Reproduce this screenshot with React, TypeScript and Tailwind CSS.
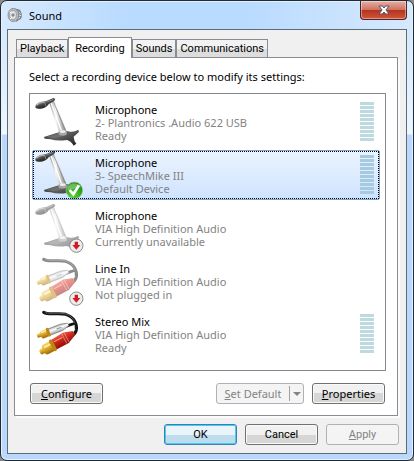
import type { ReactNode } from "react";

type Status = "ready" | "default" | "off";

type Device = {
  name: string;
  detail: string;
  state: string;
  icon: "mic" | "plug";
  status: Status;
};

const devices: Device[] = [
  { name: "Microphone", detail: "2- Plantronics .Audio 622 USB", state: "Ready", icon: "mic", status: "ready" },
  { name: "Microphone", detail: "3- SpeechMike III", state: "Default Device", icon: "mic", status: "default" },
  { name: "Microphone", detail: "VIA High Definition Audio", state: "Currently unavailable", icon: "mic", status: "off" },
  { name: "Line In", detail: "VIA High Definition Audio", state: "Not plugged in", icon: "plug", status: "off" },
  { name: "Stereo Mix", detail: "VIA High Definition Audio", state: "Ready", icon: "plug", status: "ready" },
];

const tabs = ["Playback", "Recording", "Sounds", "Communications"];

function Gradients() {
  return (
    <svg width="0" height="0" className="absolute" aria-hidden="true">
      <defs>
        <linearGradient id="metal" x1="0" y1="0" x2="1" y2="0">
          <stop offset="0" stopColor="#8b8b8b" />
          <stop offset="0.4" stopColor="#f7f7f7" />
          <stop offset="1" stopColor="#8e8e8e" />
        </linearGradient>
        <linearGradient id="head" x1="0" y1="0" x2="0" y2="1">
          <stop offset="0" stopColor="#8a8a8a" />
          <stop offset="0.5" stopColor="#444" />
          <stop offset="1" stopColor="#222" />
        </linearGradient>
        <linearGradient id="base" x1="0" y1="0" x2="1" y2="1">
          <stop offset="0" stopColor="#222" />
          <stop offset="0.45" stopColor="#5e5e5e" />
          <stop offset="1" stopColor="#1c1c1c" />
        </linearGradient>
        <linearGradient id="gold" x1="0" y1="0" x2="0" y2="1">
          <stop offset="0" stopColor="#f6d874" />
          <stop offset="0.5" stopColor="#dba726" />
          <stop offset="1" stopColor="#9a6608" />
        </linearGradient>
        <linearGradient id="red" x1="0" y1="0" x2="0" y2="1">
          <stop offset="0" stopColor="#e8604c" />
          <stop offset="0.4" stopColor="#d32a1c" />
          <stop offset="1" stopColor="#8f0f0a" />
        </linearGradient>
        <linearGradient id="silver" x1="0" y1="0" x2="0" y2="1">
          <stop offset="0" stopColor="#a5a5a5" />
          <stop offset="0.4" stopColor="#ffffff" />
          <stop offset="1" stopColor="#9b9b9b" />
        </linearGradient>
        <radialGradient id="green" cx="0.4" cy="0.8" r="0.8">
          <stop offset="0" stopColor="#5fd83a" />
          <stop offset="1" stopColor="#13880f" />
        </radialGradient>
      </defs>
    </svg>
  );
}

function MicDrawing() {
  return (
    <g>
      <path d="M30 117 L70 104 Q92 96 108 101 Q122 102 133 95 L135 102 L119 116 Q120 130 127 137 L119 143 Q112 130 98 126 Q70 130 50 124 L32 122 Z" fill="url(#base)" />
      <path d="M34 117 L72 105 L84 115 L60 121 Z" fill="#8b8b8b" opacity="0.5" />
      <path d="M44 10 L60 6 L97 98 Q90 110 76 106 Z" fill="url(#metal)" />
      <path d="M51 14 L84 102" stroke="#fff" strokeWidth="4" />
      <path d="M59 12 L93 96" stroke="#777" strokeWidth="2" />
      <ellipse cx="86" cy="105" rx="13" ry="8" fill="#a5a5a5" />
      <ellipse cx="86" cy="101" rx="9" ry="4" fill="#efefef" />
      <path d="M30 12 L58 0 L64 3 L60 10 L40 20 Z" fill="#444" />
      <path d="M38 12 L58 4" stroke="#bbb" strokeWidth="2" />
      <g transform="rotate(-18 24 21)">
        <ellipse cx="24" cy="21" rx="21" ry="10" fill="url(#head)" />
        <path d="M8 17 Q20 10 34 16" stroke="#b4b4b4" strokeWidth="3" fill="none" />
        <path d="M34 13 V29" stroke="#999" strokeWidth="2" />
      </g>
    </g>
  );
}

function PlugDrawing() {
  return (
    <g>
      <path d="M29 7 C46 17 70 7 95 13 C120 20 130 42 127 60 C125 70 120 74 112 80" fill="none" stroke="#151515" strokeWidth="9" strokeLinecap="round" />
      <path d="M125 38 C118 44 108 42 96 50" fill="none" stroke="#151515" strokeWidth="8" />
      <path d="M34 8 C50 13 72 6 96 12 C112 17 120 30 123 40" fill="none" stroke="#777" strokeWidth="2" />
      <g transform="rotate(-20 60 60)">
        <path d="M44 51 L84 50 L106 55 L106 63 L84 70 L44 71 Z" fill="url(#silver)" />
        <path d="M44 51 L84 50 L106 55 M106 63 L84 70 L44 71" stroke="#777" strokeWidth="2" fill="none" />
        <path d="M68 60 H84" stroke="#999" strokeWidth="3" />
        <rect x="6" y="54" width="15" height="12" rx="4" fill="url(#gold)" />
        <rect x="17" y="49" width="24" height="24" rx="7" fill="url(#gold)" />
        <rect x="37" y="47" width="9" height="27" rx="4" fill="#c08614" />
        <path d="M21 54 H37" stroke="#fff0b0" strokeWidth="4" />
      </g>
      <g transform="rotate(-28 70 98)">
        <path d="M58 82 L100 79 L128 89 L128 103 L100 115 L58 115 Z" fill="url(#red)" />
        <path d="M94 81 L94 114 M102 82 L102 113" stroke="#f1a095" strokeWidth="2" />
        <path d="M62 91 H90" stroke="#ff9d8a" strokeWidth="3" />
        <rect x="10" y="91" width="20" height="17" rx="6" fill="url(#gold)" />
        <rect x="22" y="83" width="34" height="33" rx="9" fill="url(#gold)" />
        <rect x="49" y="80" width="11" height="38" rx="5" fill="#bf8412" />
        <path d="M28 92 H49" stroke="#fff0b0" strokeWidth="5" />
      </g>
    </g>
  );
}

function DeviceIcon({ icon, status }: Pick<Device, "icon" | "status">) {
  return (
    <svg viewBox="0 0 144 144" className="size-12 shrink-0 overflow-visible" aria-hidden="true">
      <g opacity={status === "off" ? 0.5 : 1}>{icon === "mic" ? <MicDrawing /> : <PlugDrawing />}</g>
      {status === "default" && (
        <g>
          <circle cx="121" cy="118" r="25" fill="url(#green)" stroke="#a7c7a0" strokeWidth="2" />
          <path d="M100 108 Q120 86 142 108 Q120 112 100 118 Z" fill="#fff" opacity="0.3" />
          <path d="M107 117 L118 130 L135 103" fill="none" stroke="#fff" strokeWidth="8" />
        </g>
      )}
      {status === "off" && (
        <g>
          <circle cx="127" cy="125" r="20" fill="#ececec" stroke="#8a8a8a" strokeWidth="3" />
          <path d="M122 113 H132 V123 H139 L127 137 L115 123 H122 Z" fill="#cf1b22" />
        </g>
      )}
    </svg>
  );
}

function Meter({ selected }: { selected: boolean }) {
  return (
    <div className="mt-1 flex w-3.5 shrink-0 flex-col gap-px">
      {Array.from({ length: 10 }, (_, i) => (
        <span key={i} className={selected ? "h-[3px] bg-[#a6cbe0]" : "h-[3px] bg-[#bddae0]"} />
      ))}
    </div>
  );
}

function DeviceRow({ device }: { device: Device }) {
  const selected = device.status === "default";
  return (
    <li
      aria-selected={selected}
      role="option"
      className={[
        "relative flex h-[50px] items-start rounded-xs border pr-[5px] pl-px",
        selected ? "border-[#7da2ce] bg-linear-to-b from-[#ebf4fe] to-[#cfe3fe]" : "border-transparent",
      ].join(" ")}
    >
      {selected && <span className="absolute inset-0 border border-dotted border-black" />}
      <DeviceIcon icon={device.icon} status={device.status} />
      <div className="ml-[13px] flex-1 pt-[5px] text-[#838383]">
        <div className="text-black">{device.name}</div>
        <div>{device.detail}</div>
        <div>{device.state}</div>
      </div>
      {device.status !== "off" && <Meter selected={selected} />}
    </li>
  );
}

function Button({ children, primary, disabled }: { children: ReactNode; primary?: boolean; disabled?: boolean }) {
  const look = disabled
    ? "border-[#adb2b5] bg-[#f4f4f4] text-[#838383]"
    : primary
      ? "border-[#3c7fb1] bg-linear-to-b from-[#eaf5fb] from-50% to-[#bfdcec] to-50% text-black ring-1 ring-inset ring-[#45cdf5]"
      : "border-[#707070] bg-linear-to-b from-[#f1f1f1] from-50% to-[#d6d6d6] to-50% text-black ring-1 ring-inset ring-[#fafafa]";
  return (
    <button type="button" disabled={disabled} className={["h-[21px] w-[73px] rounded-[3px] border", look].join(" ")}>
      {children}
    </button>
  );
}

export default function App() {
  return (
    <div className="bg-[#8a8a8a] font-['Noto_Sans','Open_Sans',sans-serif] text-[11px] leading-[13px] text-black">
      <Gradients />
      <div className="rounded-[7px] border border-[#1f2a35] bg-[linear-gradient(to_bottom,transparent_28px,#e4f1ff_100px,#eef7ff_133px,#b9d8fb_134px),linear-gradient(to_right,#d6e9fd,#b9dbff_30%,#b9dbff_60%,#d6e9fd)] px-1.5 pb-1.5 inset-ring inset-ring-[#e3f1ff]">
        <header className="flex h-7 items-start justify-between">
          <div className="flex items-center gap-1.5 pt-1.5">
            <svg viewBox="0 0 48 48" className="size-4" aria-hidden="true">
              <path d="M24 6 L38 9 Q46 20 42 34 L28 43 Z" fill="#8d9296" stroke="#666b70" strokeWidth="2" />
              <path d="M34 14 L40 20 M34 24 L42 26 M33 34 L39 31" stroke="#e2e5e7" strokeWidth="3" />
              <ellipse cx="19" cy="24" rx="16" ry="20" fill="#b9bdc1" stroke="#73787d" strokeWidth="2" />
              <ellipse cx="18" cy="24" rx="10" ry="13" fill="#e6e8ea" stroke="#858a8f" strokeWidth="2" />
              <circle cx="18" cy="24" r="5" fill="#868b90" />
              <path d="M8 14 L14 19 M9 36 L14 31" stroke="#fff" strokeWidth="3" />
            </svg>
            <h1>Sound</h1>
          </div>
          <button
            type="button"
            aria-label="Close"
            className="flex h-[19px] w-[47px] items-center justify-center rounded-b-[4px] border border-t-0 border-[#4f2320] bg-[linear-gradient(#e6b0a5,#cf7262_48%,#b5321d_50%,#d0563c)] inset-ring inset-ring-white/40"
          >
            <svg viewBox="0 0 36 30" className="h-2.5 w-3" aria-hidden="true">
              <path d="M3 3 H13 L18 9 L23 3 H33 L24 15 L33 27 H23 L18 21 L13 27 H3 L12 15 Z" fill="#fff" stroke="#535666" strokeWidth="3" />
            </svg>
          </button>
        </header>

        <main className="border border-[#5b6b78] bg-[#f0f0f0] px-1.5 pt-[7px] pb-2">
          <div role="tablist" className="flex items-end pl-0.5 font-[Roboto,sans-serif]">
            {tabs.map((t) => (
              <button
                key={t}
                type="button"
                role="tab"
                aria-selected={t === "Recording"}
                className={
                  t === "Recording"
                    ? "relative -mb-px h-[21px] border border-b-0 border-[#898c95] bg-white px-1.5"
                    : "h-[18px] border border-b-0 border-[#898c95] bg-linear-to-b from-[#f2f2f2] from-50% to-[#dddddd] to-50% px-[3px]"
                }
              >
                {t}
              </button>
            ))}
          </div>

          <section className="mr-0.5 border border-[#898c95] bg-white pr-[11px] pb-[11px] pl-3.5 shadow-[2px_2px_0_#fbfbfb]">
            <p className="pt-3 pb-2.5">Select a recording device below to modify its settings:</p>
            <ul role="listbox" className="flex flex-col gap-[3px] border border-[#828790] pt-[3px] pr-[5px] pb-[11px] pl-0.5">
              {devices.map((d, i) => (
                <DeviceRow key={i} device={d} />
              ))}
            </ul>
            <div className="mt-3 flex items-center gap-2 px-px">
              <Button>
                <u>C</u>onfigure
              </Button>
              <div className="ml-auto flex h-[21px] items-center rounded-[3px] border border-[#adb2b5] bg-[#f4f4f4] text-[#838383]">
                <button type="button" disabled className="w-[72px]">
                  <u>S</u>et Default
                </button>
                <button type="button" disabled aria-label="More default options" className="flex h-[15px] w-3.5 items-center justify-center border-l border-[#a0a0a0]">
                  <svg viewBox="0 0 8 4" className="h-1 w-2" aria-hidden="true">
                    <path d="M0 0 H8 L4 4 Z" fill="#838383" />
                  </svg>
                </button>
              </div>
              <Button>
                <u>P</u>roperties
              </Button>
            </div>
          </section>

          <footer className="mt-2 flex justify-end gap-2 pr-px font-[Roboto,sans-serif]">
            <Button primary>OK</Button>
            <Button>Cancel</Button>
            <Button disabled>
              <u>A</u>pply
            </Button>
          </footer>
        </main>
      </div>
    </div>
  );
}
